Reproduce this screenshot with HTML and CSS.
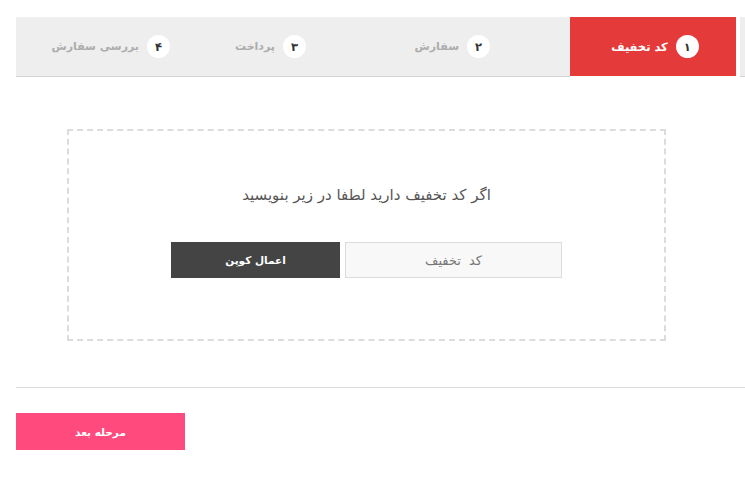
FILE: index.html
```html
<!DOCTYPE html>
<html lang="fa" dir="rtl">
<head>
<meta charset="utf-8">
<title>کد تخفیف</title>
<link rel="stylesheet" href="styles.css">
</head>
<body>
<div class="page">
  <div class="steps">
    <div class="edge"></div>
    <div class="step active"><span class="num">۱</span><span class="label">کد تخفیف</span></div>
    <div class="rest">
      <div class="step s2"><span class="num">۲</span><span class="label">سفارش</span></div>
      <div class="step s3"><span class="num">۳</span><span class="label">پرداخت</span></div>
      <div class="step s4"><span class="num">۴</span><span class="label">بررسی سفارش</span></div>
    </div>
  </div>

  <div class="coupon-box">
    <p class="hint">اگر کد تخفیف دارید لطفا در زیر بنویسید</p>
    <div class="coupon-row">
      <input class="coupon-input" type="text" placeholder="کد تخفیف">
      <button class="apply-btn" type="button">اعمال کوپن</button>
    </div>
  </div>

  <hr class="divider">

  <div class="actions">
    <button class="next-btn" type="button">مرحله بعد</button>
  </div>
</div>
</body>
</html>
```

FILE: styles.css
```css
* { box-sizing: border-box; }
html, body { margin: 0; padding: 0; background: #fff; }
body {
  font-family: "DejaVu Sans", "Noto Sans", sans-serif;
  color: #555;
  overflow: hidden;
}
.page {
  padding: 17px 0 0 16px;
}
.steps {
  display: flex;
  height: 60px;
}
.edge {
  flex: none;
  width: 5px;
  margin-left: 4px;
  background: #eeeeee;
  border-bottom: 1px solid #d4d4d4;
}
.step {
  display: flex;
  align-items: center;
  gap: 8px;
  height: 100%;
  font-size: 11px;
  font-weight: bold;
  color: #acacac;
  white-space: nowrap;
}
.step.active {
  flex: none;
  width: 166px;
  justify-content: center;
  padding-left: 4px;
  background: #e43a3a;
  color: #fff;
  height: 59px;
  font-size: 11.5px;
}
.rest {
  flex: 1;
  display: flex;
  background: #eeeeee;
  border-bottom: 1px solid #d4d4d4;
}
.rest .step { height: 59px; flex: none; }
.s2 { width: 264px; padding-right: 80px; }
.s3 { width: 136px; }
.s4 { flex: 1; }
.num {
  flex: none;
  width: 23px;
  height: 23px;
  border-radius: 50%;
  background: #fff;
  color: #333;
  display: flex;
  align-items: center;
  justify-content: center;
  font-size: 11.5px;
  font-weight: bold;
}
.coupon-box {
  margin: 52px auto 0 51px;
  width: 599px;
  height: 212px;
  border: 2px dashed #dcdcdc;
  padding-top: 53px;
}
.hint {
  margin: 0;
  text-align: center;
  font-size: 15px;
  line-height: 22px;
  color: #555;
}
.coupon-row {
  display: flex;
  justify-content: center;
  gap: 5px;
  margin-top: 36px;
}
.coupon-input {
  width: 217px;
  height: 36px;
  border: 1px solid #dcdcdc;
  background: #f8f8f8;
  text-align: center;
  font-family: "DejaVu Sans", sans-serif;
  font-size: 13px;
  word-spacing: 4px;
  color: #666;
  outline: none;
}
.coupon-input::placeholder { color: #777; }
.apply-btn {
  width: 169px;
  height: 36px;
  border: 0;
  background: #444444;
  color: #fff;
  font-family: "DejaVu Sans", sans-serif;
  font-size: 10.5px;
  font-weight: bold;
}
.divider {
  margin: 46px 0 0 0;
  border: 0;
  border-top: 1px solid #dcdcdc;
  height: 0;
}
.actions {
  display: flex;
  justify-content: flex-end;
  margin-top: 25px;
}
.next-btn {
  width: 169px;
  height: 37px;
  border: 0;
  background: #ff4a7e;
  color: #fff;
  font-family: "DejaVu Sans", sans-serif;
  font-size: 10.5px;
  font-weight: bold;
}
```
